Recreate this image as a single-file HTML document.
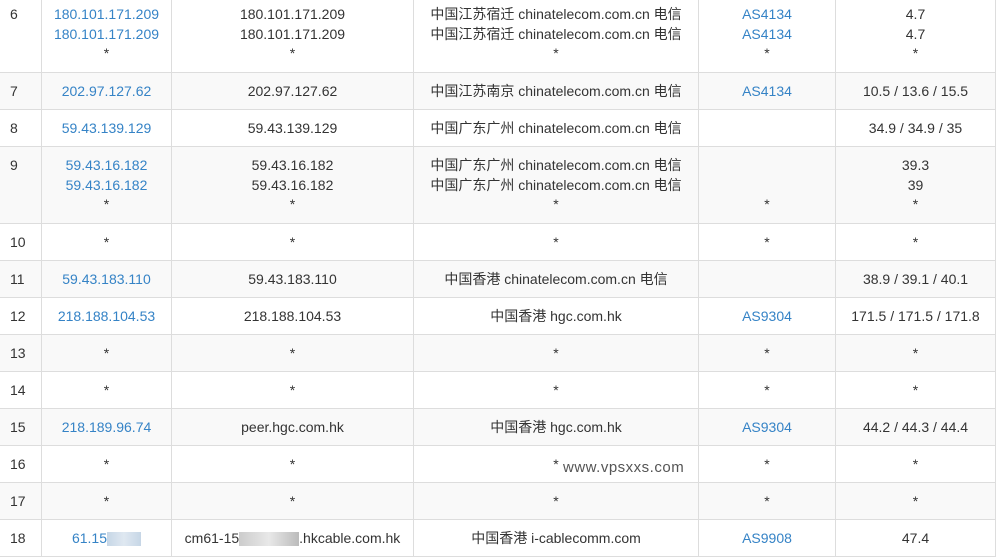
<!DOCTYPE html><html><head><meta charset="utf-8"><style>
body{margin:0;width:997px;height:545px;overflow:hidden;background:#fff;font-family:"Liberation Sans","Noto Sans CJK SC",sans-serif;font-size:14px;color:#333}
.r{position:absolute;left:0;width:996px;height:37px;border-bottom:1px solid #ddd;box-sizing:border-box}
.g{background:#f9f9f9}
.c{position:absolute;top:0;bottom:0;padding-top:9px;border-right:1px solid #ddd;box-sizing:border-box;text-align:center;line-height:19.5px}
.c0{left:0;width:42px;text-align:left;padding-left:10px}
.c1{left:42px;width:130px;color:#3583c6}
.c2{left:172px;width:242px}
.c3{left:414px;width:285px}
.c4{left:699px;width:137px;color:#3583c6}
.c5{left:836px;width:160px}
.k{color:#333}
.blur{display:inline-block;width:34px;height:14px;background:linear-gradient(90deg,#c6d6e6,#dfe8f1,#c6d6e6);vertical-align:middle}
.blur2{display:inline-block;width:60px;height:14px;background:linear-gradient(90deg,#ccc,#e8e8e8,#bbb);vertical-align:middle}
</style></head><body>
<div class="r" style="top:-1px;height:74px"><div class="c c0" style="padding-top:6px">6</div><div class="c c1" style="padding-top:6px">180.101.171.209<br>180.101.171.209<br><span class="k">*</span></div><div class="c c2" style="padding-top:6px">180.101.171.209<br>180.101.171.209<br>*</div><div class="c c3" style="padding-top:6px">中国江苏宿迁 chinatelecom.com.cn 电信<br>中国江苏宿迁 chinatelecom.com.cn 电信<br>*</div><div class="c c4" style="padding-top:6px">AS4134<br>AS4134<br><span class="k">*</span></div><div class="c c5" style="padding-top:6px">4.7<br>4.7<br>*</div></div>
<div class="r g" style="top:73px"><div class="c c0">7</div><div class="c c1">202.97.127.62</div><div class="c c2">202.97.127.62</div><div class="c c3">中国江苏南京 chinatelecom.com.cn 电信</div><div class="c c4">AS4134</div><div class="c c5">10.5 / 13.6 / 15.5</div></div>
<div class="r" style="top:110px"><div class="c c0">8</div><div class="c c1">59.43.139.129</div><div class="c c2">59.43.139.129</div><div class="c c3">中国广东广州 chinatelecom.com.cn 电信</div><div class="c c4"></div><div class="c c5">34.9 / 34.9 / 35</div></div>
<div class="r g" style="top:147px;height:77px"><div class="c c0">9</div><div class="c c1">59.43.16.182<br>59.43.16.182<br><span class="k">*</span></div><div class="c c2">59.43.16.182<br>59.43.16.182<br>*</div><div class="c c3">中国广东广州 chinatelecom.com.cn 电信<br>中国广东广州 chinatelecom.com.cn 电信<br>*</div><div class="c c4 k"><br><br>*</div><div class="c c5">39.3<br>39<br>*</div></div>
<div class="r" style="top:224px"><div class="c c0">10</div><div class="c c1 k">*</div><div class="c c2">*</div><div class="c c3">*</div><div class="c c4 k">*</div><div class="c c5">*</div></div>
<div class="r g" style="top:261px"><div class="c c0">11</div><div class="c c1">59.43.183.110</div><div class="c c2">59.43.183.110</div><div class="c c3">中国香港 chinatelecom.com.cn 电信</div><div class="c c4"></div><div class="c c5">38.9 / 39.1 / 40.1</div></div>
<div class="r" style="top:298px"><div class="c c0">12</div><div class="c c1">218.188.104.53</div><div class="c c2">218.188.104.53</div><div class="c c3">中国香港 hgc.com.hk</div><div class="c c4">AS9304</div><div class="c c5">171.5 / 171.5 / 171.8</div></div>
<div class="r g" style="top:335px"><div class="c c0">13</div><div class="c c1 k">*</div><div class="c c2">*</div><div class="c c3">*</div><div class="c c4 k">*</div><div class="c c5">*</div></div>
<div class="r" style="top:372px"><div class="c c0">14</div><div class="c c1 k">*</div><div class="c c2">*</div><div class="c c3">*</div><div class="c c4 k">*</div><div class="c c5">*</div></div>
<div class="r g" style="top:409px"><div class="c c0">15</div><div class="c c1">218.189.96.74</div><div class="c c2">peer.hgc.com.hk</div><div class="c c3">中国香港 hgc.com.hk</div><div class="c c4">AS9304</div><div class="c c5">44.2 / 44.3 / 44.4</div></div>
<div class="r" style="top:446px"><div class="c c0">16</div><div class="c c1 k">*</div><div class="c c2">*</div><div class="c c3">*</div><div class="c c4 k">*</div><div class="c c5">*</div></div>
<div class="r g" style="top:483px"><div class="c c0">17</div><div class="c c1 k">*</div><div class="c c2">*</div><div class="c c3">*</div><div class="c c4 k">*</div><div class="c c5">*</div></div>
<div class="r" style="top:520px"><div class="c c0">18</div><div class="c c1">61.15<span class="blur"></span></div><div class="c c2">cm61-15<span class="blur2"></span>.hkcable.com.hk</div><div class="c c3">中国香港 i-cablecomm.com</div><div class="c c4">AS9908</div><div class="c c5">47.4</div></div>
<div style="position:absolute;left:563px;top:459px;font-size:15px;color:#555;letter-spacing:0.5px">www.vpsxxs.com</div>
</body></html>
